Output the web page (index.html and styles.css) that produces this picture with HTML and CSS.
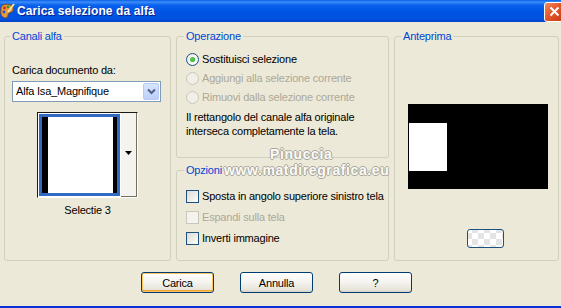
FILE: index.html
```html
<!DOCTYPE html>
<html lang="it">

<head>
    <meta charset="UTF-8">
    <meta name="viewport" content="width=device-width, initial-scale=1.0">
    <title>Carica selezione da alfa</title>
    <link rel="stylesheet" href="styles.css">
</head>

<body>
    <div class="window">
        <div class="titlebar">
            <svg class="app-icon" width="15" height="16" viewBox="0 0 15 16">
                <path d="M2 3 C5 0 12 1 13 5 C14 9 11 9 9 10 C7 11 9 14 6 15 C2 15 0 11 1 7 C1 5 1 4 2 3 Z" fill="#e89a3c" stroke="#8a4a14" stroke-width="1"/>
                <circle cx="4.5" cy="5" r="1.4" fill="#e02020"/>
                <circle cx="8" cy="4" r="1.4" fill="#2a9a2a"/>
                <circle cx="4" cy="9" r="1.4" fill="#2050d0"/>
                <path d="M14 1 L8 9" stroke="#f4e4a0" stroke-width="2"/>
            </svg>
            <span class="title">Carica selezione da alfa</span>
            <span class="close-btn">
                <svg width="11" height="11" viewBox="0 0 11 11">
                    <path d="M1.5 1.5 L9.5 9.5 M9.5 1.5 L1.5 9.5" stroke="#fff" stroke-width="2"/>
                </svg>
            </span>
        </div>

        <div class="client">
            <div class="groups">
                <!-- canali alfa -->
                <fieldset class="group group-alpha">
                    <legend>Canali alfa</legend>
                    <div class="field-label">Carica documento da:</div>
                    <div class="combo">
                        <span class="combo-text">Alfa Isa_Magnifique</span>
                        <span class="combo-btn">
                            <svg width="9" height="7" viewBox="0 0 9 7">
                                <path d="M1 1.5 L4.5 5 L8 1.5" fill="none" stroke="#4d6185" stroke-width="2"/>
                            </svg>
                        </span>
                    </div>
                    <div class="thumb-picker">
                        <div class="thumb">
                            <div class="thumb-img"></div>
                        </div>
                        <div class="thumb-arrow">
                            <svg width="7" height="4" viewBox="0 0 7 4">
                                <path d="M0 0 H7 L3.5 4 Z" fill="#000"/>
                            </svg>
                        </div>
                    </div>
                    <div class="thumb-name">Selectie 3</div>
                </fieldset>

                <div class="middle-col">
                    <fieldset class="group group-op">
                        <legend>Operazione</legend>
                        <div class="opt-row">
                            <span class="radio checked"></span>
                            <span>Sostituisci selezione</span>
                        </div>
                        <div class="opt-row disabled">
                            <span class="radio"></span>
                            <span>Aggiungi alla selezione corrente</span>
                        </div>
                        <div class="opt-row disabled">
                            <span class="radio"></span>
                            <span>Rimuovi dalla selezione corrente</span>
                        </div>
                        <p class="op-info">Il rettangolo del canale alfa originale<br>interseca completamente la tela.</p>
                    </fieldset>

                    <fieldset class="group group-opt">
                        <legend>Opzioni</legend>
                        <div class="check-row">
                            <span class="checkbox"></span>
                            <span>Sposta in angolo superiore sinistro tela</span>
                        </div>
                        <div class="check-row disabled">
                            <span class="checkbox"></span>
                            <span>Espandi sulla tela</span>
                        </div>
                        <div class="check-row">
                            <span class="checkbox"></span>
                            <span>Inverti immagine</span>
                        </div>
                    </fieldset>
                </div>

                <fieldset class="group group-preview">
                    <legend>Anteprima</legend>
                    <div class="preview-canvas">
                        <div class="preview-sel"></div>
                    </div>
                    <div class="preview-bg-btn"></div>
                </fieldset>
            </div>

            <div class="buttons">
                <button class="btn btn-default">Carica</button>
                <button class="btn">Annulla</button>
                <button class="btn">?</button>
            </div>
        </div>

        <div class="watermark">
            <div class="wm-name">Pinuccia</div>
            <div class="wm-site">www.matdiregrafica.eu</div>
        </div>
    </div>
</body>

</html>
```

FILE: styles.css
```css
* {
    margin: 0;
    padding: 0;
    box-sizing: border-box;
}

body {
    font-family: "Liberation Sans", Arial, sans-serif;
    font-size: 11px;
    line-height: 13px;
    letter-spacing: -0.2px;
    color: #000;
    background: #ece9d8;
}

.window {
    position: relative;
    width: 561px;
    height: 308px;
    display: flex;
    flex-direction: column;
    background: #ece9d8;
    border-bottom: 2px solid #0832d8;
    overflow: hidden;
}

/* title bar */
.titlebar {
    height: 22px;
    display: flex;
    align-items: center;
    background: linear-gradient(#0a5fe8 0, #3d8ef8 2px, #0a62ee 5px, #0055e5 11px, #0051df 19px, #0043c8 22px);
}

.app-icon {
    margin-left: 0;
    margin-right: 2px;
    flex: none;
}

.title {
    font-family: "Liberation Sans", Arial, sans-serif;
    font-weight: bold;
    font-size: 12px;
    letter-spacing: 0.1px;
    color: #fff;
    text-shadow: 1px 1px 0 #0a1f8c;
    flex: 1;
}

.close-btn {
    width: 20px;
    height: 20px;
    margin-top: 1px;
    margin-right: -3px;
    border: 1px solid #fff;
    border-radius: 3px;
    background: linear-gradient(135deg, #f08a62 0%, #e2582c 45%, #c83a12 100%);
    display: flex;
    align-items: center;
    justify-content: center;
}

/* client area */
.client {
    flex: 1;
    padding: 8px 0 0 4px;
}

.groups {
    display: flex;
    gap: 5px;
}

.group {
    border: 1px solid #d0d0bf;
    border-radius: 3px;
    min-width: 0;
}

.group legend {
    color: #0046d5;
    padding: 0 2px;
    margin-left: -2px;
    line-height: 13px;
}

.group-alpha {
    width: 167px;
    height: 231px;
    padding: 0 0 0 7px;
}

.field-label {
    margin-top: 21px;
}

.combo {
    margin-top: 4px;
    width: 149px;
    height: 21px;
    border: 1px solid #7f9db9;
    background: #fff;
    display: flex;
    align-items: center;
    padding: 1px;
}

.combo-text {
    flex: 1;
    padding-left: 2px;
}

.combo-btn {
    width: 16px;
    height: 17px;
    border: 1px solid #b6c9f5;
    border-radius: 2px;
    background: linear-gradient(#d9e4fd, #bccff9);
    display: flex;
    align-items: center;
    justify-content: center;
}

.thumb-picker {
    margin: 10px 0 0 25px;
    width: 101px;
    height: 86px;
    display: flex;
    border-top: 1px solid #1a1a1a;
    border-left: 1px solid #1a1a1a;
    border-right: 1px solid #fff;
    border-bottom: 1px solid #fff;
}

.thumb {
    width: 83px;
    padding: 1px;
    background: #fff;
}

.thumb-img {
    height: 100%;
    border: 3px solid #316ac5;
    background: #fff;
    box-shadow: inset 6px 0 0 #000, inset -4px 0 0 #000;
}

.thumb-arrow {
    flex: 1;
    background: #f4f3ee;
    border-right: 1px solid #716f64;
    border-bottom: 1px solid #716f64;
    display: flex;
    align-items: center;
    justify-content: center;
    padding-bottom: 4px;
}

.thumb-name {
    margin-top: 6px;
    text-align: center;
    padding-right: 7px;
}

/* middle */
.middle-col {
    width: 213px;
    display: flex;
    flex-direction: column;
    gap: 6px;
}

.group-op {
    height: 128px;
    padding: 0 0 0 9px;
}

.group-op .opt-row:first-of-type {
    margin-top: 7px;
}

.opt-row,
.check-row {
    display: flex;
    align-items: center;
    gap: 3px;
    height: 19px;
}

.check-row {
    height: 21px;
}

.disabled {
    color: #aca899;
}

.radio {
    width: 13px;
    height: 13px;
    border-radius: 50%;
    border: 1px solid #1c5180;
    background: radial-gradient(circle at 65% 65%, #fff 0, #e8e7e0 100%);
    position: relative;
    flex: none;
}

.radio.checked::after {
    content: "";
    position: absolute;
    left: 3px;
    top: 3px;
    width: 5px;
    height: 5px;
    border-radius: 50%;
    background: radial-gradient(circle at 40% 40%, #5fd35f, #21a121);
}

.disabled .radio {
    border-color: #cac8bb;
    background: #f0efe8;
}

.op-info {
    margin-top: 3px;
    line-height: 14px;
}

.group-opt {
    height: 97px;
    padding: 0 0 0 9px;
}

.group-opt .check-row:first-of-type {
    margin-top: 9px;
}

.checkbox {
    width: 13px;
    height: 13px;
    border: 1px solid #1c5180;
    background: linear-gradient(135deg, #dcdcd7 0%, #f0f0ea 60%, #fff 100%);
    flex: none;
}

.disabled .checkbox {
    border-color: #cac8bb;
    background: #f4f3ee;
}

/* preview */
.group-preview {
    width: 165px;
    height: 231px;
    padding: 0 0 0 8px;
}

.preview-canvas {
    margin: 61px 0 0 5px;
    width: 140px;
    height: 85px;
    background: #000;
    padding: 19px 0 0 1px;
}

.preview-sel {
    width: 38px;
    height: 48px;
    background: #fff;
}

.preview-bg-btn {
    margin: 40px 0 0 64px;
    width: 37px;
    height: 19px;
    border: 1px solid #1c5180;
    border-radius: 3px;
    background-color: #fff;
    background-image: conic-gradient(#e4e4e4 25%, #fff 0 50%, #e4e4e4 0 75%, #fff 0);
    background-size: 12px 12px;
    background-position: 4px 3px;
}

/* buttons */
.buttons {
    display: flex;
    gap: 26px;
    margin-top: 11px;
    padding-left: 137px;
}

.btn {
    width: 73px;
    height: 21px;
    font-family: "Liberation Sans", Arial, sans-serif;
    font-size: 11px;
    letter-spacing: -0.2px;
    color: #000;
    border: 1px solid #003c74;
    border-radius: 3px;
    background: linear-gradient(#fff 0%, #f4f3ee 50%, #e6e3d8 90%, #d6d0c5 100%);
}

.btn-default {
    box-shadow: inset 0 0 0 1px #fcc55f, inset 0 -1px 0 1px #f1a43a;
}

/* watermark over the options box */
.watermark {
    position: absolute;
    left: 224px;
    top: 146px;
    font-family: "Liberation Sans", Arial, sans-serif;
    font-weight: bold;
    font-size: 14px;
    line-height: 16px;
    letter-spacing: 0.6px;
    color: #fbfbf8;
    text-shadow: 1px 0 0 #a9a699, -1px 0 0 #a9a699, 0 1px 0 #a9a699, 0 -1px 0 #a9a699;
}

.wm-name {
    margin-left: 46px;
}
```
